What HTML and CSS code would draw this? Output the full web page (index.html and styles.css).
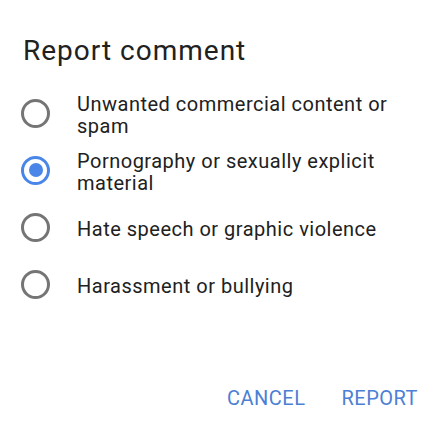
FILE: index.html
```html
<!DOCTYPE html>
<html lang="en">
<head>
    <meta charset="UTF-8">
    <meta name="viewport" content="width=device-width, initial-scale=1.0">
    <title>Report comment</title>
    <link rel="stylesheet" href="styles.css">
</head>
<body>
    <div class="dialog">
        <h2 class="dialog-title">Report comment</h2>
        <ul class="options">
            <li class="option">
                <span class="radio"></span>
                <span class="label">Unwanted commercial content or spam</span>
            </li>
            <li class="option">
                <span class="radio checked"></span>
                <span class="label">Pornography or sexually explicit material</span>
            </li>
            <li class="option">
                <span class="radio"></span>
                <span class="label">Hate speech or graphic violence</span>
            </li>
            <li class="option">
                <span class="radio"></span>
                <span class="label">Harassment or bullying</span>
            </li>
        </ul>
        <div class="actions">
            <button class="btn">CANCEL</button>
            <button class="btn">REPORT</button>
        </div>
    </div>
</body>
</html>
```

FILE: styles.css
```css
body {
    margin: 0;
    font-family: Roboto, "Liberation Sans", sans-serif;
    background-color: white;
    color: #212121;
}
.dialog {
    padding: 0 24px 0 23px;
}
.dialog-title {
    margin: 0;
    padding-top: 34px;
    font-size: 28px;
    font-weight: normal;
    line-height: 34px;
    letter-spacing: 1px;
}
.options {
    list-style: none;
    margin: 0;
    padding: 0;
    margin-top: 25px;
    display: flex;
    flex-direction: column;
    gap: 13px;
}
.option {
    display: flex;
    align-items: center;
    min-height: 44px;
}
.radio {
    flex: none;
    width: 29px;
    height: 29px;
    box-sizing: border-box;
    border: 3px solid #757575;
    border-radius: 50%;
    margin: 0 27px 4px -2px;
    display: flex;
    align-items: center;
    justify-content: center;
}
.radio.checked {
    border-color: #4a86e8;
}
.radio.checked::after {
    content: "";
    width: 14px;
    height: 14px;
    border-radius: 50%;
    background-color: #4a86e8;
}
.label {
    font-size: 20px;
    line-height: 22px;
    letter-spacing: 0.5px;
}
.actions {
    display: flex;
    justify-content: flex-end;
    gap: 36px;
    margin-top: 78px;
    padding-right: 3px;
}
.btn {
    padding: 0;
    border: none;
    background: none;
    font-family: inherit;
    font-size: 20px;
    line-height: 24px;
    letter-spacing: 0.5px;
    color: #4b80d4;
    cursor: pointer;
}
```
